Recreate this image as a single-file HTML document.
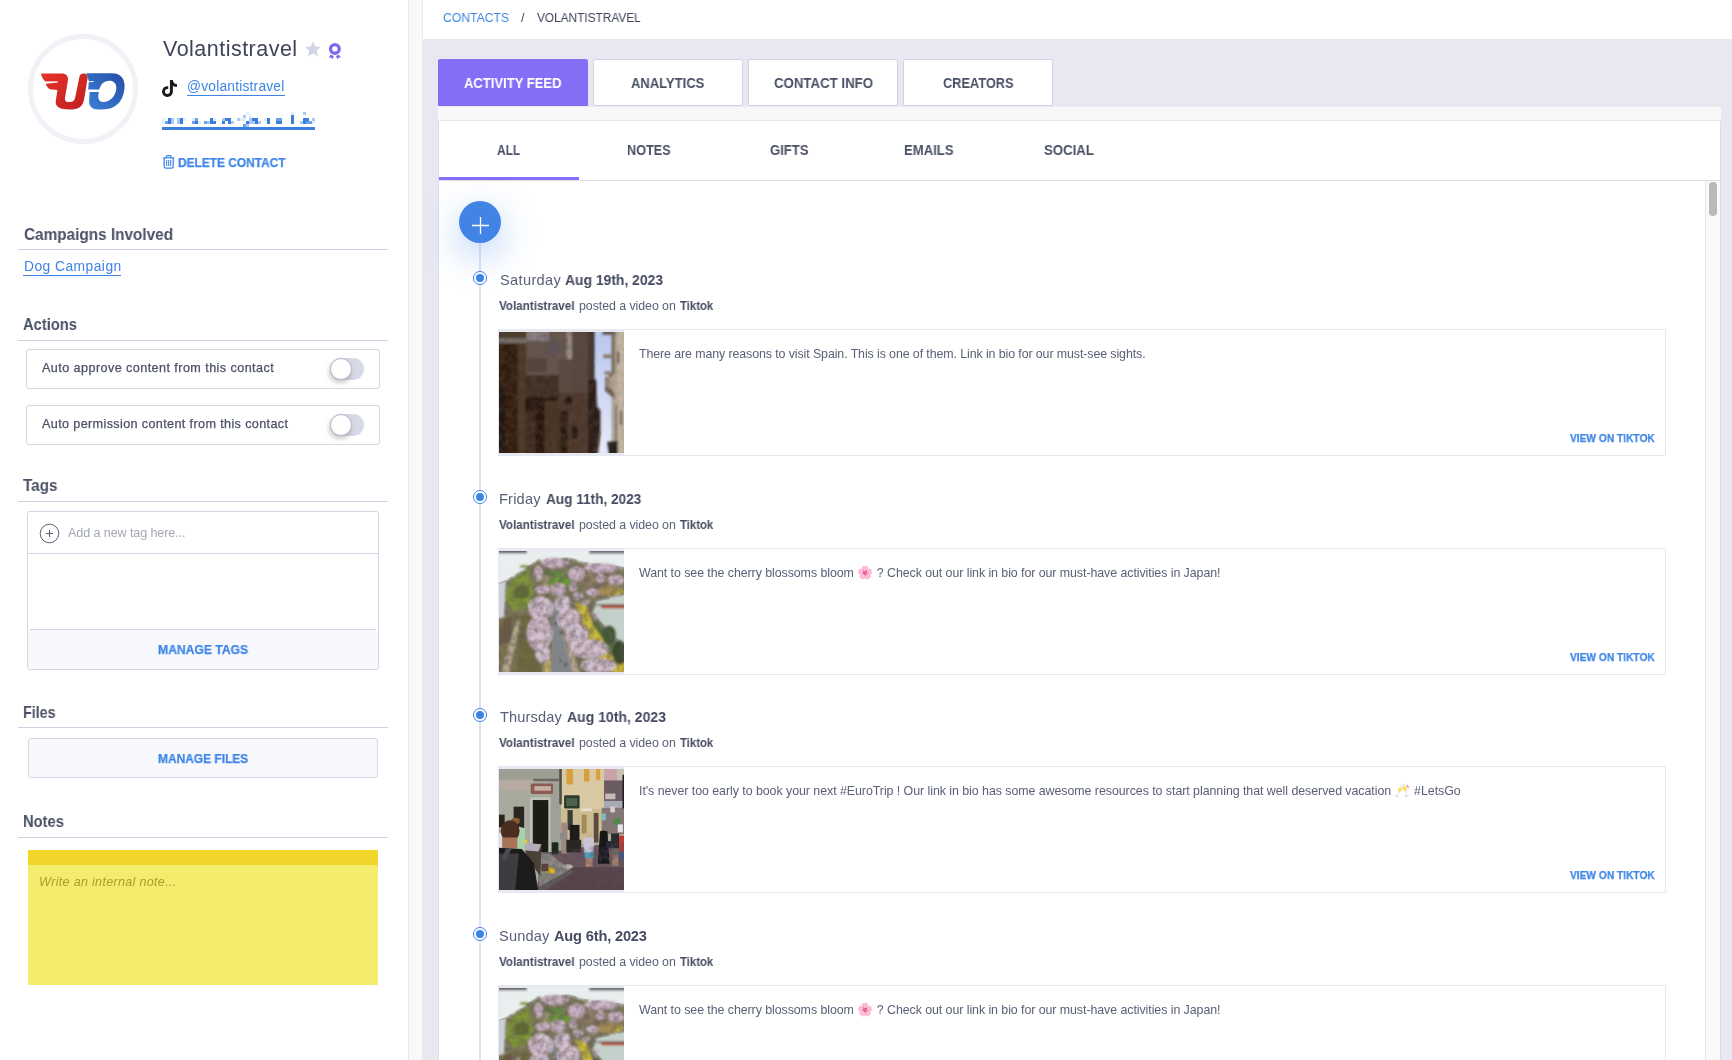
<!DOCTYPE html>
<html lang="en">
<head>
<meta charset="utf-8">
<title>Volantistravel - Contacts</title>
<style>
*{box-sizing:border-box;margin:0;padding:0}
html,body{width:1732px;height:1060px;overflow:hidden;background:#fff}
body{position:relative;font-family:"Liberation Sans",sans-serif;color:#4a5166}
.abs{position:absolute}
.t{position:absolute;white-space:nowrap;line-height:1;color:#4a5166;will-change:transform}
.b{font-weight:700}
.blue{color:#3d84e6}
a{color:inherit;text-decoration:none}
.em{font-size:13px;line-height:0;letter-spacing:0;font-family:"Noto Color Emoji","Liberation Sans",sans-serif}
.sk{-webkit-text-stroke:.25px currentColor}
#left{position:absolute;left:0;top:0;width:408px;height:1060px;background:#fff}
#lscroll{position:absolute;left:408px;top:0;width:15px;height:1060px;background:#f9f9f9;border-left:1px solid #e6e6e6;border-right:1px solid #ebebeb}
#main{position:absolute;left:423px;top:0;width:1309px;height:1060px;background:#e8e8f2}
#crumbs{position:absolute;left:423px;top:0;width:1309px;height:39px;background:#fff}
.hr{position:absolute;left:18px;width:370px;height:1px;background:#cdd1e1}
.tab{position:absolute;top:59px;width:150px;height:47px;background:#fff;border:1px solid #d0d3e2;border-radius:2px}
.tab.on{background:#846ef5;border-color:#846ef5;height:47px;border-radius:2px 2px 0 0}
.box{position:absolute;background:#fff;border:1px solid #d3d6e4;border-radius:3px}
.card{position:absolute;left:498px;width:1168px;height:127px;border:1px solid #e5e7f1;background:#fff}
.thumb{position:absolute;left:499px;width:125px;height:125px;background:#e9e9f1}
.mk{position:absolute;left:473px;width:14px;height:14px;border-radius:50%;border:1.5px solid #3d84e6;background:#fff}
.mk i{position:absolute;left:1.5px;top:1.5px;width:8px;height:8px;border-radius:50%;background:#3d84e6}
</style>
</head>
<body>
<div id="left"></div>
<div id="lscroll"></div>
<div id="main"></div>
<div id="crumbs"></div>

<!-- avatar -->
<div class="abs" style="left:28px;top:34px;width:110px;height:110px;border-radius:50%;border:5px solid #f1f2f8;background:#fff"></div>
<svg class="abs" style="left:36px;top:66px" width="94" height="50" viewBox="0 0 1732 921">
  <defs>
    <linearGradient id="gr" x1="0" y1="0" x2="1" y2="1"><stop offset="0" stop-color="#e5332a"/><stop offset="1" stop-color="#bf1f20"/></linearGradient>
    <linearGradient id="gb" x1="0" y1="1" x2="1" y2="0"><stop offset="0" stop-color="#3b82d8"/><stop offset="1" stop-color="#274ea6"/></linearGradient>
  </defs>
  <path d="M90 140 L470 140 C560 140 600 190 588 270 L535 580 C525 650 560 665 620 665 C680 665 710 640 722 580 L800 200 C808 150 850 135 890 140 C940 145 960 175 950 230 L885 620 C860 760 760 800 620 800 C450 800 345 760 365 640 L395 440 L300 435 C240 430 200 390 180 325 L400 305 L400 282 L170 285 C130 250 105 200 90 140 Z" fill="url(#gr)"/>
  <path d="M930 135 L1400 135 C1570 135 1650 250 1630 420 C1600 680 1450 800 1230 800 L1150 800 C1030 800 970 740 980 620 L990 480 L1160 480 C1130 580 1150 665 1240 665 C1380 665 1480 520 1480 400 C1480 320 1430 270 1350 270 C1250 270 1190 340 1165 435 L962 435 L972 300 L1060 296 L1060 278 L974 280 Z" fill="url(#gb)"/>
</svg>

<!-- star + badge + tiktok -->
<svg class="abs" style="left:304px;top:40px" width="18" height="18" viewBox="0 0 24 24"><path d="M12 1.800l3.100 6.700 7.300 .9-5.400 5 1.400 7.200L12 18l-6.400 3.600 1.400-7.200-5.400-5 7.300-.9z" fill="#d2d5e3"/></svg>
<svg class="abs" style="left:328px;top:42px" width="14" height="18" viewBox="0 0 14 18"><circle cx="6.900" cy="6.900" r="4.350" fill="none" stroke="#7d68f0" stroke-width="3.300"/><path d="M2.600 12.700 L0.800 15.700 3 15.500 4.300 17.200 6 13.900z M11.200 12.700 L13 15.700 10.800 15.500 9.500 17.200 7.800 13.900z" fill="#7d68f0"/></svg>
<svg class="abs" style="left:162px;top:80px" width="15" height="17" viewBox="0 0 448 512"><path fill="#1a1a1a" d="M448 209.900a210.100 210.100 0 0 1-122.800-39.300v178.800A162.600 162.600 0 1 1 185 188.300v89.900a74.600 74.600 0 1 0 52.200 71.200V0h88a121.200 121.200 0 0 0 1.900 22.200 122.200 122.200 0 0 0 53.900 80.200 121.400 121.400 0 0 0 67 20.100z"/></svg>
<div class="abs" style="left:187px;top:95px;width:98px;height:1px;background:#3d84e6"></div>

<!-- blurred email mosaic -->
<svg class="abs" id="mosaic" style="left:162px;top:112px" width="153" height="18" viewBox="0 0 153 18" shape-rendering="crispEdges">
<rect x="141" y="0" width="3" height="3" fill="#a6caf2"/><rect x="129" y="0" width="3" height="3" fill="#e3eefb"/><rect x="84" y="0" width="3" height="3" fill="#e3eefb"/><rect x="81" y="3" width="3" height="3" fill="#a6caf2"/><rect x="129" y="3" width="3" height="3" fill="#3b7ee0"/><rect x="87" y="3" width="3" height="3" fill="#e3eefb"/><rect x="0" y="6" width="3" height="3" fill="#e3eefb"/><rect x="6" y="6" width="3" height="3" fill="#3b7ee0"/><rect x="9" y="6" width="3" height="3" fill="#a6caf2"/><rect x="15" y="6" width="3" height="3" fill="#a6caf2"/><rect x="18" y="6" width="3" height="3" fill="#3b7ee0"/><rect x="21" y="6" width="3" height="3" fill="#e3eefb"/><rect x="30" y="6" width="3" height="3" fill="#e3eefb"/><rect x="33" y="6" width="3" height="3" fill="#6aa2e8"/><rect x="48" y="6" width="3" height="3" fill="#3b7ee0"/><rect x="51" y="6" width="3" height="3" fill="#e3eefb"/><rect x="60" y="6" width="3" height="3" fill="#a6caf2"/><rect x="63" y="6" width="3" height="3" fill="#3b7ee0"/><rect x="66" y="6" width="3" height="3" fill="#3b7ee0"/><rect x="75" y="6" width="3" height="3" fill="#a6caf2"/><rect x="78" y="6" width="3" height="3" fill="#e3eefb"/><rect x="81" y="6" width="3" height="3" fill="#e3eefb"/><rect x="87" y="6" width="3" height="3" fill="#a6caf2"/><rect x="90" y="6" width="3" height="3" fill="#3b7ee0"/><rect x="93" y="6" width="3" height="3" fill="#3b7ee0"/><rect x="102" y="6" width="3" height="3" fill="#e3eefb"/><rect x="105" y="6" width="3" height="3" fill="#3b7ee0"/><rect x="114" y="6" width="3" height="3" fill="#6aa2e8"/><rect x="117" y="6" width="3" height="3" fill="#6aa2e8"/><rect x="129" y="6" width="3" height="3" fill="#3b7ee0"/><rect x="141" y="6" width="3" height="3" fill="#3b7ee0"/><rect x="144" y="6" width="3" height="3" fill="#3b7ee0"/><rect x="150" y="6" width="3" height="3" fill="#a6caf2"/><rect x="0" y="9" width="3" height="3" fill="#e3eefb"/><rect x="3" y="9" width="3" height="3" fill="#6aa2e8"/><rect x="6" y="9" width="3" height="3" fill="#3b7ee0"/><rect x="9" y="9" width="3" height="3" fill="#a6caf2"/><rect x="15" y="9" width="3" height="3" fill="#a6caf2"/><rect x="18" y="9" width="3" height="3" fill="#3b7ee0"/><rect x="30" y="9" width="3" height="3" fill="#6aa2e8"/><rect x="33" y="9" width="3" height="3" fill="#3b7ee0"/><rect x="36" y="9" width="3" height="3" fill="#e3eefb"/><rect x="42" y="9" width="3" height="3" fill="#6aa2e8"/><rect x="45" y="9" width="3" height="3" fill="#a6caf2"/><rect x="48" y="9" width="3" height="3" fill="#3b7ee0"/><rect x="51" y="9" width="3" height="3" fill="#3b7ee0"/><rect x="60" y="9" width="3" height="3" fill="#3b7ee0"/><rect x="66" y="9" width="3" height="3" fill="#3b7ee0"/><rect x="69" y="9" width="3" height="3" fill="#a6caf2"/><rect x="84" y="9" width="3" height="3" fill="#3b7ee0"/><rect x="87" y="9" width="3" height="3" fill="#a6caf2"/><rect x="90" y="9" width="3" height="3" fill="#a6caf2"/><rect x="93" y="9" width="3" height="3" fill="#3b7ee0"/><rect x="96" y="9" width="3" height="3" fill="#a6caf2"/><rect x="105" y="9" width="3" height="3" fill="#3b7ee0"/><rect x="114" y="9" width="3" height="3" fill="#3b7ee0"/><rect x="117" y="9" width="3" height="3" fill="#3b7ee0"/><rect x="129" y="9" width="3" height="3" fill="#3b7ee0"/><rect x="138" y="9" width="3" height="3" fill="#a6caf2"/><rect x="141" y="9" width="3" height="3" fill="#3b7ee0"/><rect x="144" y="9" width="3" height="3" fill="#6aa2e8"/><rect x="147" y="9" width="3" height="3" fill="#6aa2e8"/><rect x="150" y="9" width="3" height="3" fill="#e3eefb"/><rect x="81" y="12" width="3" height="3" fill="#6aa2e8"/><rect x="84" y="12" width="3" height="3" fill="#a6caf2"/>
<rect x="0" y="15" width="153" height="3" fill="#3b7ee0"/>
</svg>

<!-- delete icon -->
<svg class="abs" style="left:163px;top:155px" width="12" height="14" viewBox="0 0 12 14" fill="none" stroke="#3d84e6"><path stroke-width="1.300" d="M0.200 2.900h11M3.400 2.700v-1.200q0-.8 .8-.8h3q.8 0 .8 .8v1.200M1.200 3.200v8.300q0 1.700 1.700 1.700h5.600q1.700 0 1.700-1.700V3.200"/><path stroke-width="1.050" d="M3.700 5v6M5.700 5v6M7.700 5v6"/></svg>

<!-- section rules -->
<div class="hr" style="top:249px"></div>
<div class="abs" style="left:23px;top:275px;width:98px;height:1px;background:#3d84e6"></div>
<div class="hr" style="top:340px"></div>
<div class="hr" style="top:501px"></div>
<div class="hr" style="top:727px"></div>
<div class="hr" style="top:837px"></div>

<!-- action boxes -->
<div class="box" style="left:26px;top:349px;width:354px;height:40px"></div>
<div class="box" style="left:26px;top:405px;width:354px;height:40px"></div>
<div class="abs" style="left:330px;top:358px;width:34px;height:22px;border-radius:11px;background:#d7d9e6"></div>
<div class="abs" style="left:330px;top:358px;width:22px;height:22px;border-radius:50%;background:#fff;border:1px solid #b7b9cc;box-shadow:-1px 3px 5px rgba(0,0,0,.22)"></div>
<div class="abs" style="left:330px;top:414px;width:34px;height:22px;border-radius:11px;background:#d7d9e6"></div>
<div class="abs" style="left:330px;top:414px;width:22px;height:22px;border-radius:50%;background:#fff;border:1px solid #b7b9cc;box-shadow:-1px 3px 5px rgba(0,0,0,.22)"></div>

<!-- tags box -->
<div class="box" style="left:27px;top:511px;width:352px;height:159px"></div>
<div class="abs" style="left:28px;top:553px;width:350px;height:1px;background:#d3d6e4"></div>
<div class="abs" style="left:28px;top:630px;width:350px;height:39px;background:#f7f8fc;border-radius:0 0 3px 3px"></div>
<div class="abs" style="left:30px;top:629px;width:346px;height:1px;background:#d3d6e4"></div>
<svg class="abs" style="left:39px;top:523px" width="21" height="21" viewBox="0 0 21 21" fill="none" stroke="#5b6078" stroke-width="1"><circle cx="10.500" cy="10.500" r="9.300"/><path d="M10.500 7v7M7 10.500h7"/></svg>

<!-- files button -->
<div class="box" style="left:28px;top:738px;width:350px;height:40px;background:#f7f8fc"></div>

<!-- sticky note -->
<div class="abs" style="left:28px;top:850px;width:350px;height:135px;background:#f3ec6c"></div>
<div class="abs" style="left:28px;top:850px;width:350px;height:15px;background:#f1d52b"></div>

<!-- top tabs -->
<div class="tab on" style="left:438px"></div>
<div class="tab" style="left:593px"></div>
<div class="tab" style="left:748px"></div>
<div class="tab" style="left:903px"></div>
<!-- horizontal scrollbar track -->
<div class="abs" style="left:438px;top:106px;width:1283px;height:14px;background:#f8f8f8;border-top:1px solid #ececee"></div>
<!-- feed panel -->
<div class="abs" style="left:438px;top:120px;width:1283px;height:940px;background:#fff;border-left:1px solid #d9dcea;border-right:1px solid #d9dcea;border-top:1px solid #e9e9ec"></div>
<div class="abs" style="left:439px;top:180px;width:1281px;height:1px;background:#dcdfee"></div>
<div class="abs" style="left:439px;top:177px;width:140px;height:3px;background:#846ef5"></div>
<!-- inner vertical scrollbar -->
<div class="abs" style="left:1705px;top:181px;width:15px;height:879px;background:#f9f9f9;border-left:1px solid #e6e6e6"></div>
<div class="abs" style="left:1709px;top:182px;width:8px;height:34px;border-radius:4px;background:#b9b9b9"></div>

<!-- timeline -->
<div class="abs" style="left:479px;top:240px;width:2px;height:820px;background:#dfe2f1"></div>
<div class="abs" style="left:459px;top:201px;width:42px;height:42px;border-radius:50%;background:#4184e6;box-shadow:0 12px 36px rgba(65,132,230,.4)"></div>
<svg class="abs" style="left:471px;top:216px" width="19" height="19" viewBox="0 0 19 19" stroke="#fff" stroke-width="1.300"><path d="M9.500 1v17M1 9.500h17"/></svg>
<div class="mk" style="top:271px"><i></i></div>
<div class="card" style="top:329px"></div>
<div class="thumb" style="top:330px"></div>
<div class="abs" style="left:499px;top:332px;width:125px;height:121px;overflow:hidden"><svg width="125" height="121" viewBox="0 0 1095 1060" preserveAspectRatio="none">
<defs><filter id="bl0" x="-5%" y="-5%" width="110%" height="110%"><feGaussianBlur stdDeviation="7"/></filter>
<linearGradient id="sky0" x1="0" y1="0" x2="0" y2="1"><stop offset="0" stop-color="#b9c6ee"/><stop offset="1" stop-color="#e6eaf9"/></linearGradient><filter id="nz0" x="0" y="0" width="100%" height="100%"><feTurbulence type="fractalNoise" baseFrequency="0.018" numOctaves="2" seed="7"/><feColorMatrix type="matrix" values="0 0 0 0 0.1  0 0 0 0 0.07  0 0 0 0 0.06  1.5 0 0 0 -0.5"/></filter><mask id="mk0"><rect width="1095" height="1060" fill="#fff"/><polygon points="840,-20 990,-20 990,200 1012,350 930,400 930,520 1012,590 1022,950 950,970 960,1080 868,1080 892,870 892,690 862,650 856,430 840,400" fill="#000"/><rect x="985" y="-20" width="130" height="1100" fill="#444"/></mask></defs>
<rect width="1095" height="1060" fill="#46301f"/>
<g filter="url(#bl0)">
<rect x="-20" y="-20" width="270" height="130" fill="#54432f"/>
<rect x="-20" y="55" width="260" height="45" fill="#8f8682"/>
<rect x="-20" y="100" width="100" height="980" fill="#33200f"/>
<rect x="-20" y="480" width="70" height="600" fill="#22140c"/>
<rect x="70" y="100" width="100" height="980" fill="#38230f"/>
<rect x="165" y="100" width="75" height="980" fill="#55402d"/>
<rect x="240" y="-20" width="200" height="100" fill="#a0979a"/>
<rect x="440" y="-20" width="150" height="110" fill="#78685b"/>
<rect x="240" y="80" width="350" height="300" fill="#74665d"/>
<rect x="250" y="230" width="170" height="120" fill="#5f4f44"/>
<rect x="430" y="90" width="100" height="100" fill="#6a6068"/>
<rect x="590" y="-20" width="50" height="260" fill="#b5aa9f"/>
<rect x="640" y="-20" width="145" height="560" fill="#62534c"/>
<rect x="780" y="-20" width="60" height="440" fill="#4e3e34"/>
<rect x="520" y="240" width="130" height="300" fill="#67574d"/>
<rect x="230" y="380" width="290" height="200" fill="#493626"/>
<rect x="230" y="570" width="290" height="130" fill="#2b1a10"/>
<rect x="230" y="700" width="90" height="380" fill="#453222"/>
<rect x="320" y="690" width="85" height="390" fill="#2e1c10"/>
<rect x="400" y="600" width="140" height="480" fill="#4f3b2a"/>
<rect x="540" y="680" width="65" height="400" fill="#2e1d13"/>
<rect x="600" y="540" width="185" height="540" fill="#574231"/>
<rect x="520" y="540" width="90" height="150" fill="#524030"/>
<circle cx="610" cy="603" r="36" fill="#2a1a14"/>
<rect x="640" y="825" width="50" height="110" fill="#2a1a10"/>
<rect x="780" y="420" width="80" height="660" fill="#2f2118"/>
<rect x="850" y="690" width="42" height="180" fill="#2f2118"/>
<rect x="-20" y="-20" width="880" height="1100" fill="#1a0e06" opacity="0.16"/>
<polygon points="840,-20 990,-20 990,200 1012,350 930,400 930,520 1012,590 1022,950 950,970 960,1080 868,1080 892,870 892,690 862,650 856,430 840,400" fill="url(#sky0)"/>
<rect x="985" y="-20" width="130" height="1100" fill="#b5a797"/>
<rect x="1040" y="-20" width="70" height="1100" fill="#c2b5a4"/>
<rect x="905" y="-20" width="115" height="48" fill="#6b5d50"/>
<rect x="985" y="30" width="30" height="340" fill="#7b6a58"/>
<rect x="912" y="195" width="90" height="36" fill="#8d7c6a"/>
<rect x="922" y="343" width="80" height="32" fill="#8d7c6a"/>
<polygon points="932,385 1000,385 1012,590 940,520" fill="#a89c8d"/>
<polygon points="932,490 1012,590 1012,540 945,470" fill="#6a5c50"/>
<rect x="1035" y="175" width="18" height="100" fill="#5c4e44"/>
<rect x="1020" y="640" width="14" height="300" fill="#6d5e52"/>
<rect x="1060" y="690" width="18" height="120" fill="#5c4e44"/>
<polygon points="945,960 1040,950 1040,1080 960,1080" fill="#27211f"/>
</g>
<rect width="1095" height="1060" filter="url(#nz0)" mask="url(#mk0)" opacity="0.6"/>
</svg>
</div>
<div class="mk" style="top:490px"><i></i></div>
<div class="card" style="top:548px"></div>
<div class="thumb" style="top:549px"></div>
<div class="abs" style="left:499px;top:551px;width:125px;height:121px;overflow:hidden"><svg width="125" height="121" viewBox="0 0 1095 1060" preserveAspectRatio="none">
<defs><filter id="bl1" x="-5%" y="-5%" width="110%" height="110%"><feGaussianBlur stdDeviation="9"/></filter><filter id="nz1" x="0" y="0" width="100%" height="100%"><feTurbulence type="fractalNoise" baseFrequency="0.018" numOctaves="2" seed="7"/><feColorMatrix type="matrix" values="0 0 0 0 0.12  0 0 0 0 0.09  0 0 0 0 0.08  1.5 0 0 0 -0.5"/></filter><mask id="mk1"><rect width="1095" height="1060" fill="#fff"/><polygon points="-20,-20 1115,-20 1115,140 750,95 620,55 340,70 250,135 60,255 -20,285" fill="#000"/><polygon points="-20,300 60,270 45,580 -20,595" fill="#000"/><polygon points="860,445 1115,385 1115,800 1010,750 910,630 835,540" fill="#000"/><polygon points="460,460 500,460 520,600 600,880 660,1080 460,1080 465,800 470,600" fill="#222"/></mask></defs>
<rect width="1095" height="1060" fill="#7d7a5c"/>
<g filter="url(#bl1)">
<polygon points="-20,-20 1115,-20 1115,160 750,110 620,70 340,85 250,150 60,270 -20,300" fill="#e9eeee"/>
<rect x="-20" y="-20" width="265" height="40" fill="#5c5a62"/>
<rect x="790" y="-20" width="330" height="42" fill="#6c6a72"/>
<polygon points="-20,300 60,270 45,580 -20,595" fill="#cdd2da"/>
<polygon points="250,150 310,350 285,490 120,525 50,420 90,290 180,200" fill="#7f9639"/>
<ellipse cx="200" cy="360" rx="70" ry="60" fill="#5e6e30"/>
<ellipse cx="225" cy="135" rx="45" ry="14" fill="#7f9639"/>
<polygon points="-20,595 240,520 250,1080 -20,1080" fill="#7b7450"/>
<polygon points="40,600 120,560 100,800 -20,820" fill="#6a5a44"/>
<polygon points="150,620 192,600 85,1080 15,1080" fill="#b3a98e"/>
<polygon points="190,560 300,560 380,1080 150,1080" fill="#706a3c"/>
<!-- brown / green interior -->
<ellipse cx="780" cy="250" rx="80" ry="65" fill="#8c7c64"/>
<ellipse cx="960" cy="350" rx="120" ry="50" fill="#a38c55"/>
<ellipse cx="1055" cy="360" rx="40" ry="20" fill="#d2c13a"/>
<ellipse cx="462" cy="120" rx="65" ry="28" fill="#46572f"/>
<ellipse cx="485" cy="195" rx="88" ry="22" fill="#5d8a3a"/>
<ellipse cx="530" cy="275" rx="100" ry="52" fill="#6a9a35"/>
<polygon points="390,220 440,220 420,330 380,320" fill="#a59a78"/>
<!-- water right -->
<polygon points="850,435 1115,375 1115,810 1000,760 900,640 820,540" fill="#c4d1cb"/>
<rect x="895" y="476" width="225" height="26" fill="#b2472f"/>
<rect x="850" y="468" width="260" height="10" fill="#5a3a30"/>
<!-- yellow band -->
<polygon points="655,455 760,470 805,600 905,750 965,900 1115,1000 1115,1080 1000,1080 850,905 760,740 720,560" fill="#cbb93a"/>
<polygon points="800,560 870,640 1000,780 1010,900 930,800 830,660" fill="#55703a"/>
<ellipse cx="965" cy="735" rx="62" ry="85" fill="#3f5a34"/>
<ellipse cx="1055" cy="890" rx="62" ry="105" fill="#33482c"/>
<!-- road -->
<polygon points="452,440 502,440 522,600 602,880 665,1080 455,1080 462,800 468,600" fill="#82868b"/>
<polygon points="560,730 622,760 705,1080 652,1080" fill="#b8a68d"/>
<polygon points="402,880 452,880 452,1080 388,1080" fill="#c9b96c"/>
<!-- blossoms -->
<g fill="#c9b2c4">
<ellipse cx="490" cy="105" rx="126" ry="47"/>
<ellipse cx="345" cy="195" rx="41" ry="65"/>
<ellipse cx="385" cy="340" rx="74" ry="36"/>
<ellipse cx="520" cy="335" rx="70" ry="56"/>
<ellipse cx="680" cy="200" rx="76" ry="65"/>
<ellipse cx="900" cy="150" rx="153" ry="45"/>
<ellipse cx="1025" cy="250" rx="76" ry="47"/>
<ellipse cx="890" cy="240" rx="41" ry="41"/>
<ellipse cx="650" cy="312" rx="38" ry="41"/>
<ellipse cx="820" cy="362" rx="56" ry="36"/>
<ellipse cx="692" cy="395" rx="47" ry="32"/>
<ellipse cx="760" cy="450" rx="32" ry="27"/>
<ellipse cx="850" cy="570" rx="20" ry="36"/>
</g>
<g fill="#d2bfcf">
<ellipse cx="365" cy="500" rx="110" ry="101"/>
<ellipse cx="355" cy="720" rx="112" ry="155"/>
<ellipse cx="385" cy="905" rx="65" ry="76"/>
<ellipse cx="560" cy="465" rx="74" ry="74"/>
<ellipse cx="612" cy="600" rx="101" ry="101"/>
<ellipse cx="682" cy="740" rx="101" ry="101"/>
<ellipse cx="790" cy="860" rx="166" ry="83"/>
<ellipse cx="870" cy="1005" rx="155" ry="65"/>
</g>
<g fill="#3a3a44">
<circle cx="498" cy="632" r="11"/><circle cx="542" cy="716" r="11"/><circle cx="540" cy="965" r="10"/><circle cx="585" cy="995" r="12"/><circle cx="700" cy="985" r="10"/><circle cx="712" cy="945" r="12"/><circle cx="476" cy="585" r="8"/>
</g>
</g>
<rect width="1095" height="1060" filter="url(#nz1)" mask="url(#mk1)" opacity="0.8"/>
</svg>
</div>
<div class="mk" style="top:708px"><i></i></div>
<div class="card" style="top:766px"></div>
<div class="thumb" style="top:767px"></div>
<div class="abs" style="left:499px;top:769px;width:125px;height:121px;overflow:hidden"><svg width="125" height="121" viewBox="0 0 1095 1060" preserveAspectRatio="none">
<defs><filter id="bl2" x="-5%" y="-5%" width="110%" height="110%"><feGaussianBlur stdDeviation="6"/></filter>
<filter id="nz2" x="0" y="0" width="100%" height="100%"><feTurbulence type="fractalNoise" baseFrequency="0.02" numOctaves="2" seed="11"/><feColorMatrix type="matrix" values="0 0 0 0 0.1  0 0 0 0 0.08  0 0 0 0 0.1  1.5 0 0 0 -0.5"/></filter>
<clipPath id="rd2"><polygon points="370,740 1095,640 1095,1060 340,1060"/></clipPath></defs>
<rect width="1095" height="1060" fill="#a8a99d"/>
<g filter="url(#bl2)">
<rect x="-20" y="-20" width="570" height="120" fill="#9d9f95"/>
<rect x="-20" y="95" width="330" height="95" fill="#b7aaa0"/>
<rect x="-20" y="190" width="570" height="560" fill="#a9aa9e"/>
<rect x="440" y="100" width="100" height="640" fill="#9fa096"/>
<!-- yellow building -->
<rect x="545" y="-20" width="380" height="670" fill="#d9c9a2"/>
<rect x="545" y="350" width="380" height="300" fill="#cdbb92"/>
<rect x="590" y="-20" width="58" height="155" fill="#d8a03e"/>
<rect x="745" y="-20" width="46" height="130" fill="#d8a03e"/>
<rect x="850" y="-20" width="36" height="115" fill="#d8a03e"/>
<rect x="528" y="-20" width="22" height="330" fill="#4c4c4a"/>
<!-- far street -->
<rect x="920" y="-20" width="195" height="590" fill="#b6b0b8"/>
<rect x="930" y="-20" width="105" height="115" fill="#cca2aa"/>
<rect x="1035" y="-20" width="80" height="120" fill="#c8c0b4"/>
<rect x="920" y="100" width="195" height="180" fill="#6c5c62"/>
<rect x="930" y="215" width="90" height="50" fill="#c8b8b8"/>
<rect x="920" y="280" width="195" height="140" fill="#a9aab4"/>
<rect x="900" y="340" width="215" height="230" fill="#857674"/>
<rect x="1005" y="430" width="55" height="60" fill="#4c8a4c"/>
<rect x="1040" y="485" width="45" height="70" fill="#e4e4e8"/>
<rect x="975" y="330" width="40" height="50" fill="#d8d0d0"/>
<rect x="900" y="390" width="35" height="60" fill="#7ac0c0"/>
<rect x="1082" y="50" width="30" height="295" fill="#1e1e22"/>
<!-- sign, door, boards -->
<rect x="278" y="128" width="195" height="92" rx="14" fill="#8c5c52"/>
<rect x="310" y="150" width="145" height="40" fill="#c8aea6"/>
<rect x="300" y="85" width="225" height="22" fill="#6a6862"/>
<rect x="272" y="248" width="180" height="495" fill="#c0c1b7"/>
<rect x="296" y="272" width="136" height="460" fill="#1f1b19"/>
<rect x="128" y="330" width="92" height="190" fill="#2b2523"/>
<rect x="570" y="230" width="136" height="116" rx="12" fill="#2a3a2d"/>
<rect x="590" y="255" width="95" height="70" fill="#4c6450"/>
<rect x="600" y="360" width="46" height="175" fill="#3b3b39"/>
<rect x="725" y="400" width="42" height="165" fill="#a38c52"/>
<rect x="830" y="385" width="42" height="260" fill="#5b4b41"/>
<rect x="715" y="345" width="100" height="25" fill="#e4dccc"/>
<!-- road -->
<polygon points="370,740 1115,630 1115,1080 330,1080" fill="#58434a"/>
<polygon points="380,745 1115,635 1115,860 560,860" fill="#6b575c"/>
<polygon points="372,742 445,742 625,880 350,1035 340,900" fill="#8b8981"/>
<polygon points="350,1035 625,880 660,900 380,1080 340,1080" fill="#5e5a58"/>
<!-- stone block -->
<polygon points="220,650 372,662 362,940 240,770" fill="#493f38"/>
<polygon points="222,645 372,660 345,722 215,712" fill="#b2acba"/>
<!-- people mid -->
<rect x="462" y="642" width="58" height="104" rx="8" fill="#1d2a1f"/>
<rect x="545" y="470" width="55" height="270" fill="#9f8a80"/>
<rect x="535" y="560" width="60" height="55" fill="#8a8a90"/>
<rect x="620" y="490" width="85" height="235" fill="#1e1a1c"/>
<rect x="590" y="620" width="130" height="110" fill="#2b2524"/>
<circle cx="785" cy="575" r="27" fill="#c9b292"/>
<rect x="742" y="600" width="88" height="135" rx="14" fill="#c9c5d6"/>
<rect x="750" y="730" width="80" height="50" fill="#49a0c0"/>
<rect x="758" y="780" width="62" height="75" fill="#b08a72"/>
<polygon points="885,545 950,545 968,830 865,830" fill="#15171a"/>
<circle cx="915" cy="570" r="32" fill="#1a1614"/>
<rect x="982" y="565" width="70" height="130" fill="#2a2a2e"/>
<rect x="985" y="695" width="65" height="60" fill="#6b6561"/>
<rect x="995" y="755" width="50" height="95" fill="#a48470"/>
<rect x="1052" y="585" width="60" height="140" fill="#c23b31"/>
<rect x="1052" y="725" width="60" height="65" fill="#3b5b92"/>
<rect x="940" y="630" width="70" height="65" rx="20" fill="#2a2c34"/>
<ellipse cx="450" cy="888" rx="42" ry="30" fill="#e1b91f"/>
<rect x="372" y="830" width="60" height="65" fill="#5a4030"/>
<ellipse cx="600" cy="855" rx="50" ry="20" fill="#b8b4b0"/>
<!-- left people -->
<rect x="-20" y="400" width="70" height="110" fill="#2e221c"/>
<rect x="-20" y="560" width="45" height="130" fill="#e0dde8"/>
<ellipse cx="145" cy="455" rx="38" ry="28" fill="#8b5b31"/>
<polygon points="150,500 228,520 222,722 150,705" fill="#a9d1ab"/>
<ellipse cx="232" cy="635" rx="14" ry="20" fill="#e2d33a"/>
<!-- foreground man -->
<ellipse cx="98" cy="545" rx="82" ry="95" fill="#4b2f23"/>
<rect x="30" y="600" width="130" height="95" fill="#a9735a"/>
<polygon points="-20,690 200,700 305,825 345,1080 -20,1080" fill="#1b1b1e"/>
<polygon points="-20,740 175,740 140,1080 -20,1080" fill="#3a3c41"/>
<polygon points="60,700 110,700 60,800 20,790" fill="#4a4c50"/>
</g>
<rect width="1095" height="1060" filter="url(#nz2)" opacity="0.7" clip-path="url(#rd2)"/>
</svg>
</div>
<div class="mk" style="top:927px"><i></i></div>
<div class="card" style="top:985px"></div>
<div class="thumb" style="top:986px"></div>
<div class="abs" style="left:499px;top:988px;width:125px;height:121px;overflow:hidden"><svg width="125" height="121" viewBox="0 0 1095 1060" preserveAspectRatio="none">
<defs><filter id="bl3" x="-5%" y="-5%" width="110%" height="110%"><feGaussianBlur stdDeviation="9"/></filter><filter id="nz3" x="0" y="0" width="100%" height="100%"><feTurbulence type="fractalNoise" baseFrequency="0.018" numOctaves="2" seed="7"/><feColorMatrix type="matrix" values="0 0 0 0 0.12  0 0 0 0 0.09  0 0 0 0 0.08  1.5 0 0 0 -0.5"/></filter><mask id="mk3"><rect width="1095" height="1060" fill="#fff"/><polygon points="-20,-20 1115,-20 1115,140 750,95 620,55 340,70 250,135 60,255 -20,285" fill="#000"/><polygon points="-20,300 60,270 45,580 -20,595" fill="#000"/><polygon points="860,445 1115,385 1115,800 1010,750 910,630 835,540" fill="#000"/><polygon points="460,460 500,460 520,600 600,880 660,1080 460,1080 465,800 470,600" fill="#222"/></mask></defs>
<rect width="1095" height="1060" fill="#7d7a5c"/>
<g filter="url(#bl3)">
<polygon points="-20,-20 1115,-20 1115,160 750,110 620,70 340,85 250,150 60,270 -20,300" fill="#e9eeee"/>
<rect x="-20" y="-20" width="265" height="40" fill="#5c5a62"/>
<rect x="790" y="-20" width="330" height="42" fill="#6c6a72"/>
<polygon points="-20,300 60,270 45,580 -20,595" fill="#cdd2da"/>
<polygon points="250,150 310,350 285,490 120,525 50,420 90,290 180,200" fill="#7f9639"/>
<ellipse cx="200" cy="360" rx="70" ry="60" fill="#5e6e30"/>
<ellipse cx="225" cy="135" rx="45" ry="14" fill="#7f9639"/>
<polygon points="-20,595 240,520 250,1080 -20,1080" fill="#7b7450"/>
<polygon points="40,600 120,560 100,800 -20,820" fill="#6a5a44"/>
<polygon points="150,620 192,600 85,1080 15,1080" fill="#b3a98e"/>
<polygon points="190,560 300,560 380,1080 150,1080" fill="#706a3c"/>
<!-- brown / green interior -->
<ellipse cx="780" cy="250" rx="80" ry="65" fill="#8c7c64"/>
<ellipse cx="960" cy="350" rx="120" ry="50" fill="#a38c55"/>
<ellipse cx="1055" cy="360" rx="40" ry="20" fill="#d2c13a"/>
<ellipse cx="462" cy="120" rx="65" ry="28" fill="#46572f"/>
<ellipse cx="485" cy="195" rx="88" ry="22" fill="#5d8a3a"/>
<ellipse cx="530" cy="275" rx="100" ry="52" fill="#6a9a35"/>
<polygon points="390,220 440,220 420,330 380,320" fill="#a59a78"/>
<!-- water right -->
<polygon points="850,435 1115,375 1115,810 1000,760 900,640 820,540" fill="#c4d1cb"/>
<rect x="895" y="476" width="225" height="26" fill="#b2472f"/>
<rect x="850" y="468" width="260" height="10" fill="#5a3a30"/>
<!-- yellow band -->
<polygon points="655,455 760,470 805,600 905,750 965,900 1115,1000 1115,1080 1000,1080 850,905 760,740 720,560" fill="#cbb93a"/>
<polygon points="800,560 870,640 1000,780 1010,900 930,800 830,660" fill="#55703a"/>
<ellipse cx="965" cy="735" rx="62" ry="85" fill="#3f5a34"/>
<ellipse cx="1055" cy="890" rx="62" ry="105" fill="#33482c"/>
<!-- road -->
<polygon points="452,440 502,440 522,600 602,880 665,1080 455,1080 462,800 468,600" fill="#82868b"/>
<polygon points="560,730 622,760 705,1080 652,1080" fill="#b8a68d"/>
<polygon points="402,880 452,880 452,1080 388,1080" fill="#c9b96c"/>
<!-- blossoms -->
<g fill="#c9b2c4">
<ellipse cx="490" cy="105" rx="126" ry="47"/>
<ellipse cx="345" cy="195" rx="41" ry="65"/>
<ellipse cx="385" cy="340" rx="74" ry="36"/>
<ellipse cx="520" cy="335" rx="70" ry="56"/>
<ellipse cx="680" cy="200" rx="76" ry="65"/>
<ellipse cx="900" cy="150" rx="153" ry="45"/>
<ellipse cx="1025" cy="250" rx="76" ry="47"/>
<ellipse cx="890" cy="240" rx="41" ry="41"/>
<ellipse cx="650" cy="312" rx="38" ry="41"/>
<ellipse cx="820" cy="362" rx="56" ry="36"/>
<ellipse cx="692" cy="395" rx="47" ry="32"/>
<ellipse cx="760" cy="450" rx="32" ry="27"/>
<ellipse cx="850" cy="570" rx="20" ry="36"/>
</g>
<g fill="#d2bfcf">
<ellipse cx="365" cy="500" rx="110" ry="101"/>
<ellipse cx="355" cy="720" rx="112" ry="155"/>
<ellipse cx="385" cy="905" rx="65" ry="76"/>
<ellipse cx="560" cy="465" rx="74" ry="74"/>
<ellipse cx="612" cy="600" rx="101" ry="101"/>
<ellipse cx="682" cy="740" rx="101" ry="101"/>
<ellipse cx="790" cy="860" rx="166" ry="83"/>
<ellipse cx="870" cy="1005" rx="155" ry="65"/>
</g>
<g fill="#3a3a44">
<circle cx="498" cy="632" r="11"/><circle cx="542" cy="716" r="11"/><circle cx="540" cy="965" r="10"/><circle cx="585" cy="995" r="12"/><circle cx="700" cy="985" r="10"/><circle cx="712" cy="945" r="12"/><circle cx="476" cy="585" r="8"/>
</g>
</g>
<rect width="1095" height="1060" filter="url(#nz3)" mask="url(#mk3)" opacity="0.8"/>
</svg>
</div>

<div class="t blue" id="c1" style="left:443.30px;top:12.00px;font-size:12.5px;transform:scaleX(0.9745);transform-origin:0 0;">CONTACTS</div>
<div class="t " id="c2" style="left:520.60px;top:12.00px;font-size:12.5px;color:#3f4459">/</div>
<div class="t " id="c3" style="left:536.90px;top:12.00px;font-size:12.5px;transform:scaleX(0.9468);transform-origin:0 0;color:#3f4459">VOLANTISTRAVEL</div>
<div class="t " id="nm" style="left:163.20px;top:39.00px;font-size:21.5px;letter-spacing:0.478px;color:#3f4459">Volantistravel</div>
<div class="t blue" id="at" style="left:187.30px;top:80.00px;font-size:13.8px;letter-spacing:0.198px;">@volantistravel</div>
<div class="t b blue sk" id="del" style="left:178.20px;top:157.00px;font-size:12.5px;transform:scaleX(0.9525);transform-origin:0 0;">DELETE CONTACT</div>
<div class="t b" id="h1" style="left:23.70px;top:226.00px;font-size:16.4px;transform:scaleX(0.9347);transform-origin:0 0;">Campaigns Involved</div>
<div class="t blue" id="dog" style="left:23.50px;top:260.00px;font-size:13.8px;letter-spacing:0.470px;">Dog Campaign</div>
<div class="t b" id="h2" style="left:23.20px;top:316.00px;font-size:16.4px;transform:scaleX(0.8967);transform-origin:0 0;">Actions</div>
<div class="t sk" id="a1" style="left:42.00px;top:362.00px;font-size:12.6px;letter-spacing:0.434px;">Auto approve content from this contact</div>
<div class="t sk" id="a2" style="left:42.00px;top:418.00px;font-size:12.6px;letter-spacing:0.375px;">Auto permission content from this contact</div>
<div class="t b" id="h3" style="left:23.20px;top:477.00px;font-size:16.4px;transform:scaleX(0.9286);transform-origin:0 0;">Tags</div>
<div class="t " id="ph" style="left:68.00px;top:527.00px;font-size:12.6px;letter-spacing:-0.112px;color:#a3a7b9">Add a new tag here...</div>
<div class="t b blue sk" id="mt" style="left:158.00px;top:644.00px;font-size:12.5px;transform:scaleX(0.9706);transform-origin:0 0;">MANAGE TAGS</div>
<div class="t b" id="h4" style="left:23.40px;top:704.00px;font-size:16.4px;transform:scaleX(0.8726);transform-origin:0 0;">Files</div>
<div class="t b blue sk" id="mf" style="left:157.80px;top:753.00px;font-size:12.5px;transform:scaleX(0.9550);transform-origin:0 0;">MANAGE FILES</div>
<div class="t b" id="h5" style="left:23.40px;top:813.00px;font-size:16.4px;transform:scaleX(0.8980);transform-origin:0 0;">Notes</div>
<div class="t " id="wn" style="left:39.10px;top:876.00px;font-size:12.6px;letter-spacing:0.292px;font-style:italic;color:#a99f2e">Write an internal note...</div>
<div class="t b" id="tb1" style="left:464.10px;top:76.00px;font-size:14px;transform:scaleX(0.9297);transform-origin:0 0;color:#fff">ACTIVITY FEED</div>
<div class="t b" id="tb2" style="left:631.20px;top:76.00px;font-size:14px;transform:scaleX(0.9299);transform-origin:0 0;">ANALYTICS</div>
<div class="t b" id="tb3" style="left:773.50px;top:76.00px;font-size:14px;transform:scaleX(0.9462);transform-origin:0 0;">CONTACT INFO</div>
<div class="t b" id="tb4" style="left:942.80px;top:76.00px;font-size:14px;transform:scaleX(0.9123);transform-origin:0 0;">CREATORS</div>
<div class="t b" id="st1" style="left:497.40px;top:144.00px;font-size:13.8px;transform:scaleX(0.8648);transform-origin:0 0;">ALL</div>
<div class="t b" id="st2" style="left:627.20px;top:144.00px;font-size:13.8px;transform:scaleX(0.9194);transform-origin:0 0;">NOTES</div>
<div class="t b" id="st3" style="left:769.80px;top:144.00px;font-size:13.8px;transform:scaleX(0.9477);transform-origin:0 0;">GIFTS</div>
<div class="t b" id="st4" style="left:904.40px;top:144.00px;font-size:13.8px;transform:scaleX(0.9496);transform-origin:0 0;">EMAILS</div>
<div class="t b" id="st5" style="left:1044.30px;top:144.00px;font-size:13.8px;transform:scaleX(0.9554);transform-origin:0 0;">SOCIAL</div>
<div class="t " id="d0" style="left:499.60px;top:273.00px;font-size:14.6px;letter-spacing:0.340px;color:#5a6077">Saturday</div>
<div class="t b" id="e0" style="left:565.40px;top:273.00px;font-size:14.6px;transform:scaleX(0.9513);transform-origin:0 0;color:#454b61">Aug 19th, 2023</div>
<div class="t b" id="p0" style="left:499.30px;top:300.00px;font-size:12.4px;transform:scaleX(0.9397);transform-origin:0 0;color:#454b61">Volantistravel</div>
<div class="t " id="q0" style="left:578.70px;top:300.00px;font-size:12.4px;letter-spacing:-0.064px;color:#5a6077">posted a video on</div>
<div class="t b" id="r0" style="left:679.50px;top:300.00px;font-size:12.4px;transform:scaleX(0.9182);transform-origin:0 0;color:#454b61">Tiktok</div>
<div class="t " id="x0" style="left:639.40px;top:348.00px;font-size:12.4px;letter-spacing:-0.095px;color:#5a6077">There are many reasons to visit Spain. This is one of them. Link in bio for our must-see sights.</div>
<div class="t b blue sk" id="v0" style="left:1570.10px;top:433.00px;font-size:11.4px;transform:scaleX(0.8942);transform-origin:0 0;">VIEW ON TIKTOK</div>
<div class="t " id="d1" style="left:499.40px;top:492.00px;font-size:14.6px;letter-spacing:0.191px;color:#5a6077">Friday</div>
<div class="t b" id="e1" style="left:545.50px;top:492.00px;font-size:14.6px;transform:scaleX(0.9325);transform-origin:0 0;color:#454b61">Aug 11th, 2023</div>
<div class="t b" id="p1" style="left:499.30px;top:519.00px;font-size:12.4px;transform:scaleX(0.9397);transform-origin:0 0;color:#454b61">Volantistravel</div>
<div class="t " id="q1" style="left:578.70px;top:519.00px;font-size:12.4px;letter-spacing:-0.064px;color:#5a6077">posted a video on</div>
<div class="t b" id="r1" style="left:679.50px;top:519.00px;font-size:12.4px;transform:scaleX(0.9182);transform-origin:0 0;color:#454b61">Tiktok</div>
<div class="t " id="x1" style="left:639.40px;top:567.00px;font-size:12.4px;letter-spacing:-0.063px;color:#5a6077">Want to see the cherry blossoms bloom <span class="em">&#127800;</span> ? Check out our link in bio for our must-have activities in Japan!</div>
<div class="t b blue sk" id="v1" style="left:1570.10px;top:652.00px;font-size:11.4px;transform:scaleX(0.8942);transform-origin:0 0;">VIEW ON TIKTOK</div>
<div class="t " id="d2" style="left:499.90px;top:710.00px;font-size:14.6px;letter-spacing:0.137px;color:#5a6077">Thursday</div>
<div class="t b" id="e2" style="left:566.50px;top:710.00px;font-size:14.6px;transform:scaleX(0.9600);transform-origin:0 0;color:#454b61">Aug 10th, 2023</div>
<div class="t b" id="p2" style="left:499.30px;top:737.00px;font-size:12.4px;transform:scaleX(0.9397);transform-origin:0 0;color:#454b61">Volantistravel</div>
<div class="t " id="q2" style="left:578.70px;top:737.00px;font-size:12.4px;letter-spacing:-0.064px;color:#5a6077">posted a video on</div>
<div class="t b" id="r2" style="left:679.50px;top:737.00px;font-size:12.4px;transform:scaleX(0.9182);transform-origin:0 0;color:#454b61">Tiktok</div>
<div class="t " id="x2" style="left:639.40px;top:785.00px;font-size:12.4px;letter-spacing:-0.048px;color:#5a6077">It's never too early to book your next #EuroTrip ! Our link in bio has some awesome resources to start planning that well deserved vacation <span class="em">&#129346;</span> #LetsGo</div>
<div class="t b blue sk" id="v2" style="left:1570.10px;top:870.00px;font-size:11.4px;transform:scaleX(0.8942);transform-origin:0 0;">VIEW ON TIKTOK</div>
<div class="t " id="d3" style="left:499.40px;top:929.00px;font-size:14.6px;letter-spacing:0.160px;color:#5a6077">Sunday</div>
<div class="t b" id="e3" style="left:554.30px;top:929.00px;font-size:14.6px;letter-spacing:-0.166px;color:#454b61">Aug 6th, 2023</div>
<div class="t b" id="p3" style="left:499.30px;top:956.00px;font-size:12.4px;transform:scaleX(0.9397);transform-origin:0 0;color:#454b61">Volantistravel</div>
<div class="t " id="q3" style="left:578.70px;top:956.00px;font-size:12.4px;letter-spacing:-0.064px;color:#5a6077">posted a video on</div>
<div class="t b" id="r3" style="left:679.50px;top:956.00px;font-size:12.4px;transform:scaleX(0.9182);transform-origin:0 0;color:#454b61">Tiktok</div>
<div class="t " id="x3" style="left:639.40px;top:1004.00px;font-size:12.4px;letter-spacing:-0.063px;color:#5a6077">Want to see the cherry blossoms bloom <span class="em">&#127800;</span> ? Check out our link in bio for our must-have activities in Japan!</div>
<div class="t b blue sk" id="v3" style="left:1570.10px;top:1089.00px;font-size:11.4px;transform:scaleX(0.8942);transform-origin:0 0;">VIEW ON TIKTOK</div>
</body>
</html>
